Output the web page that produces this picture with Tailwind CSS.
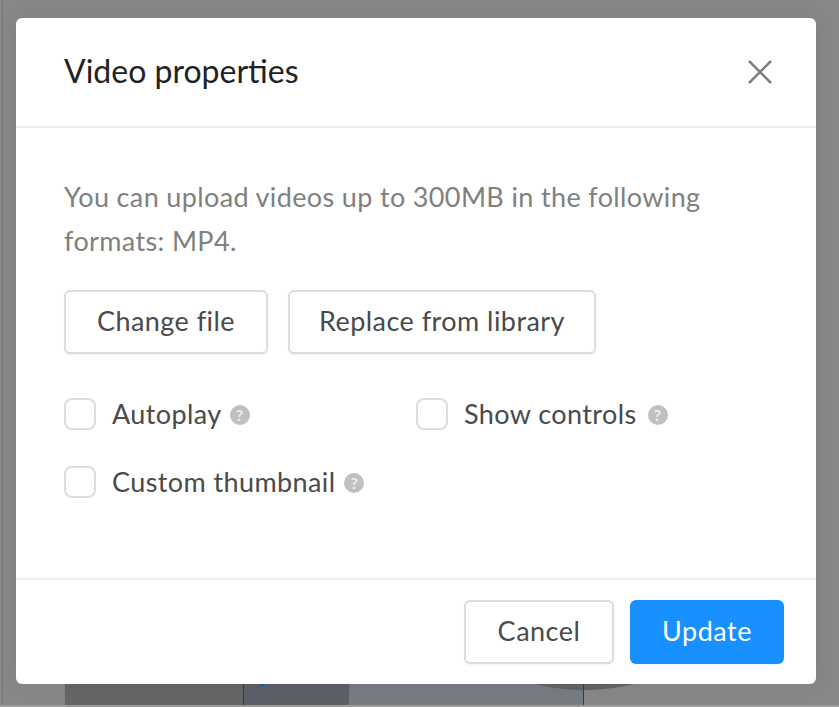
<!DOCTYPE html>
<html lang="en">

<head>
    <meta charset="UTF-8">
    <meta name="viewport" content="width=device-width, initial-scale=1.0">
    <title>Video properties</title>
    <script src="https://cdn.jsdelivr.net/npm/@tailwindcss/browser@4"></script>
</head>

<body class="bg-[#888888]" style='font-family: Lato, "Open Sans", sans-serif;'>
    <div class="relative w-[839px] h-[707px] overflow-hidden pt-[18px] pl-[16px]">
        <!-- page behind the overlay -->
        <div class="absolute left-[2px] top-0 w-px h-full bg-[#767676]"></div>
        <div class="absolute left-[65px] top-[684px] w-[178px] h-[23px] bg-[#666666]"></div>
        <div class="absolute left-[243px] top-[684px] w-[106px] h-[23px] bg-[#5c6068]"></div>
        <div class="absolute left-[349px] top-[684px] w-[235px] h-[23px] bg-[#787c85]"></div>
        <div class="absolute left-[376px] top-[274px] w-[416px] h-[416px] rounded-full bg-[#62646a]"></div>
        <div class="absolute left-[243px] top-[684px] w-px h-[23px] bg-[#1c3c8c]"></div>
        <div class="absolute left-[583px] top-[684px] w-px h-[23px] bg-[#1c3c8c]"></div>
        <div class="absolute left-[258px] top-[677px] w-[8px] h-[9px] rounded-full border-2 border-[#1c5cb0]"></div>
        <div class="absolute left-0 bottom-0 w-full h-[2px] bg-[#9a9a9a]"></div>

        <div class="relative w-[800px] h-[666px] bg-white rounded-[6px] flex flex-col shadow-[0_0_24px_rgba(0,0,0,0.08)]">
            <div class="h-[110px] border-b-2 border-[#eeeeee] flex items-center justify-between pl-[48px] pr-[44px] shrink-0">
                <h1 class="text-[32px] text-[#222222] font-normal mt-[-2px]">Video properties</h1>
                <svg width="24" height="24" viewBox="0 0 24 24" fill="none" stroke="#808080" stroke-width="2.6">
                    <path d="M1 1 L23 23 M23 1 L1 23" />
                </svg>
            </div>

            <div class="flex-1 px-[48px] pt-[47px]">
                <p class="text-[27px] leading-[44px] tracking-[0.36px] text-[#808080] w-[660px]">You can upload videos up to 300MB in the following formats: MP4.</p>
                <div class="flex gap-[20px] mt-[27px] text-[27px] tracking-[0.45px] text-[#4a4a4a]">
                    <button class="w-[204px] h-[64px] pb-[2px] bg-white border-2 border-[#dcdcdc] rounded-[6px] shadow-[0_1px_2px_rgba(0,0,0,0.06)]">Change file</button>
                    <button class="w-[308px] h-[64px] pb-[2px] bg-white border-2 border-[#dcdcdc] rounded-[6px] shadow-[0_1px_2px_rgba(0,0,0,0.06)]">Replace from library</button>
                </div>
                <div class="grid grid-cols-[352px_1fr] gap-y-[36px] mt-[44px] text-[27px] tracking-[0.4px] text-[#4a4a4a]">
                    <label class="flex items-center h-[32px]">
                        <span class="w-[32px] h-[32px] border-2 border-[#dcdcdc] rounded-[8px] mr-[16px]"></span><span class="mt-[1px]">Autoplay</span>
                        <span class="w-[20px] h-[20px] ml-[8px] mt-[2px] rounded-full bg-[#c0c0c0] text-[#eeeeee] text-[16px] font-bold flex items-center justify-center">?</span>
                    </label>
                    <label class="flex items-center h-[32px]">
                        <span class="w-[32px] h-[32px] border-2 border-[#dcdcdc] rounded-[8px] mr-[16px]"></span><span class="mt-[1px]">Show controls</span>
                        <span class="w-[20px] h-[20px] ml-[11px] mt-[2px] rounded-full bg-[#c0c0c0] text-[#eeeeee] text-[16px] font-bold flex items-center justify-center">?</span>
                    </label>
                    <label class="flex items-center h-[32px]">
                        <span class="w-[32px] h-[32px] border-2 border-[#dcdcdc] rounded-[8px] mr-[16px]"></span><span class="mt-[1px]">Custom thumbnail</span>
                        <span class="w-[20px] h-[20px] ml-[9px] mt-[2px] rounded-full bg-[#c0c0c0] text-[#eeeeee] text-[16px] font-bold flex items-center justify-center">?</span>
                    </label>
                </div>
            </div>

            <div class="h-[106px] border-t-2 border-[#eeeeee] flex justify-end gap-[16px] pt-[20px] pr-[32px] shrink-0 text-[27px] tracking-[0.5px]">
                <button class="w-[150px] h-[64px] pb-[2px] bg-white border-2 border-[#dcdcdc] rounded-[6px] text-[#4a4a4a] shadow-[0_1px_2px_rgba(0,0,0,0.06)]">Cancel</button>
                <button class="w-[154px] h-[64px] pb-[2px] bg-[#1890ff] rounded-[6px] text-white shadow-[0_1px_2px_rgba(0,0,0,0.06)]">Update</button>
            </div>
        </div>
    </div>
</body>

</html>
